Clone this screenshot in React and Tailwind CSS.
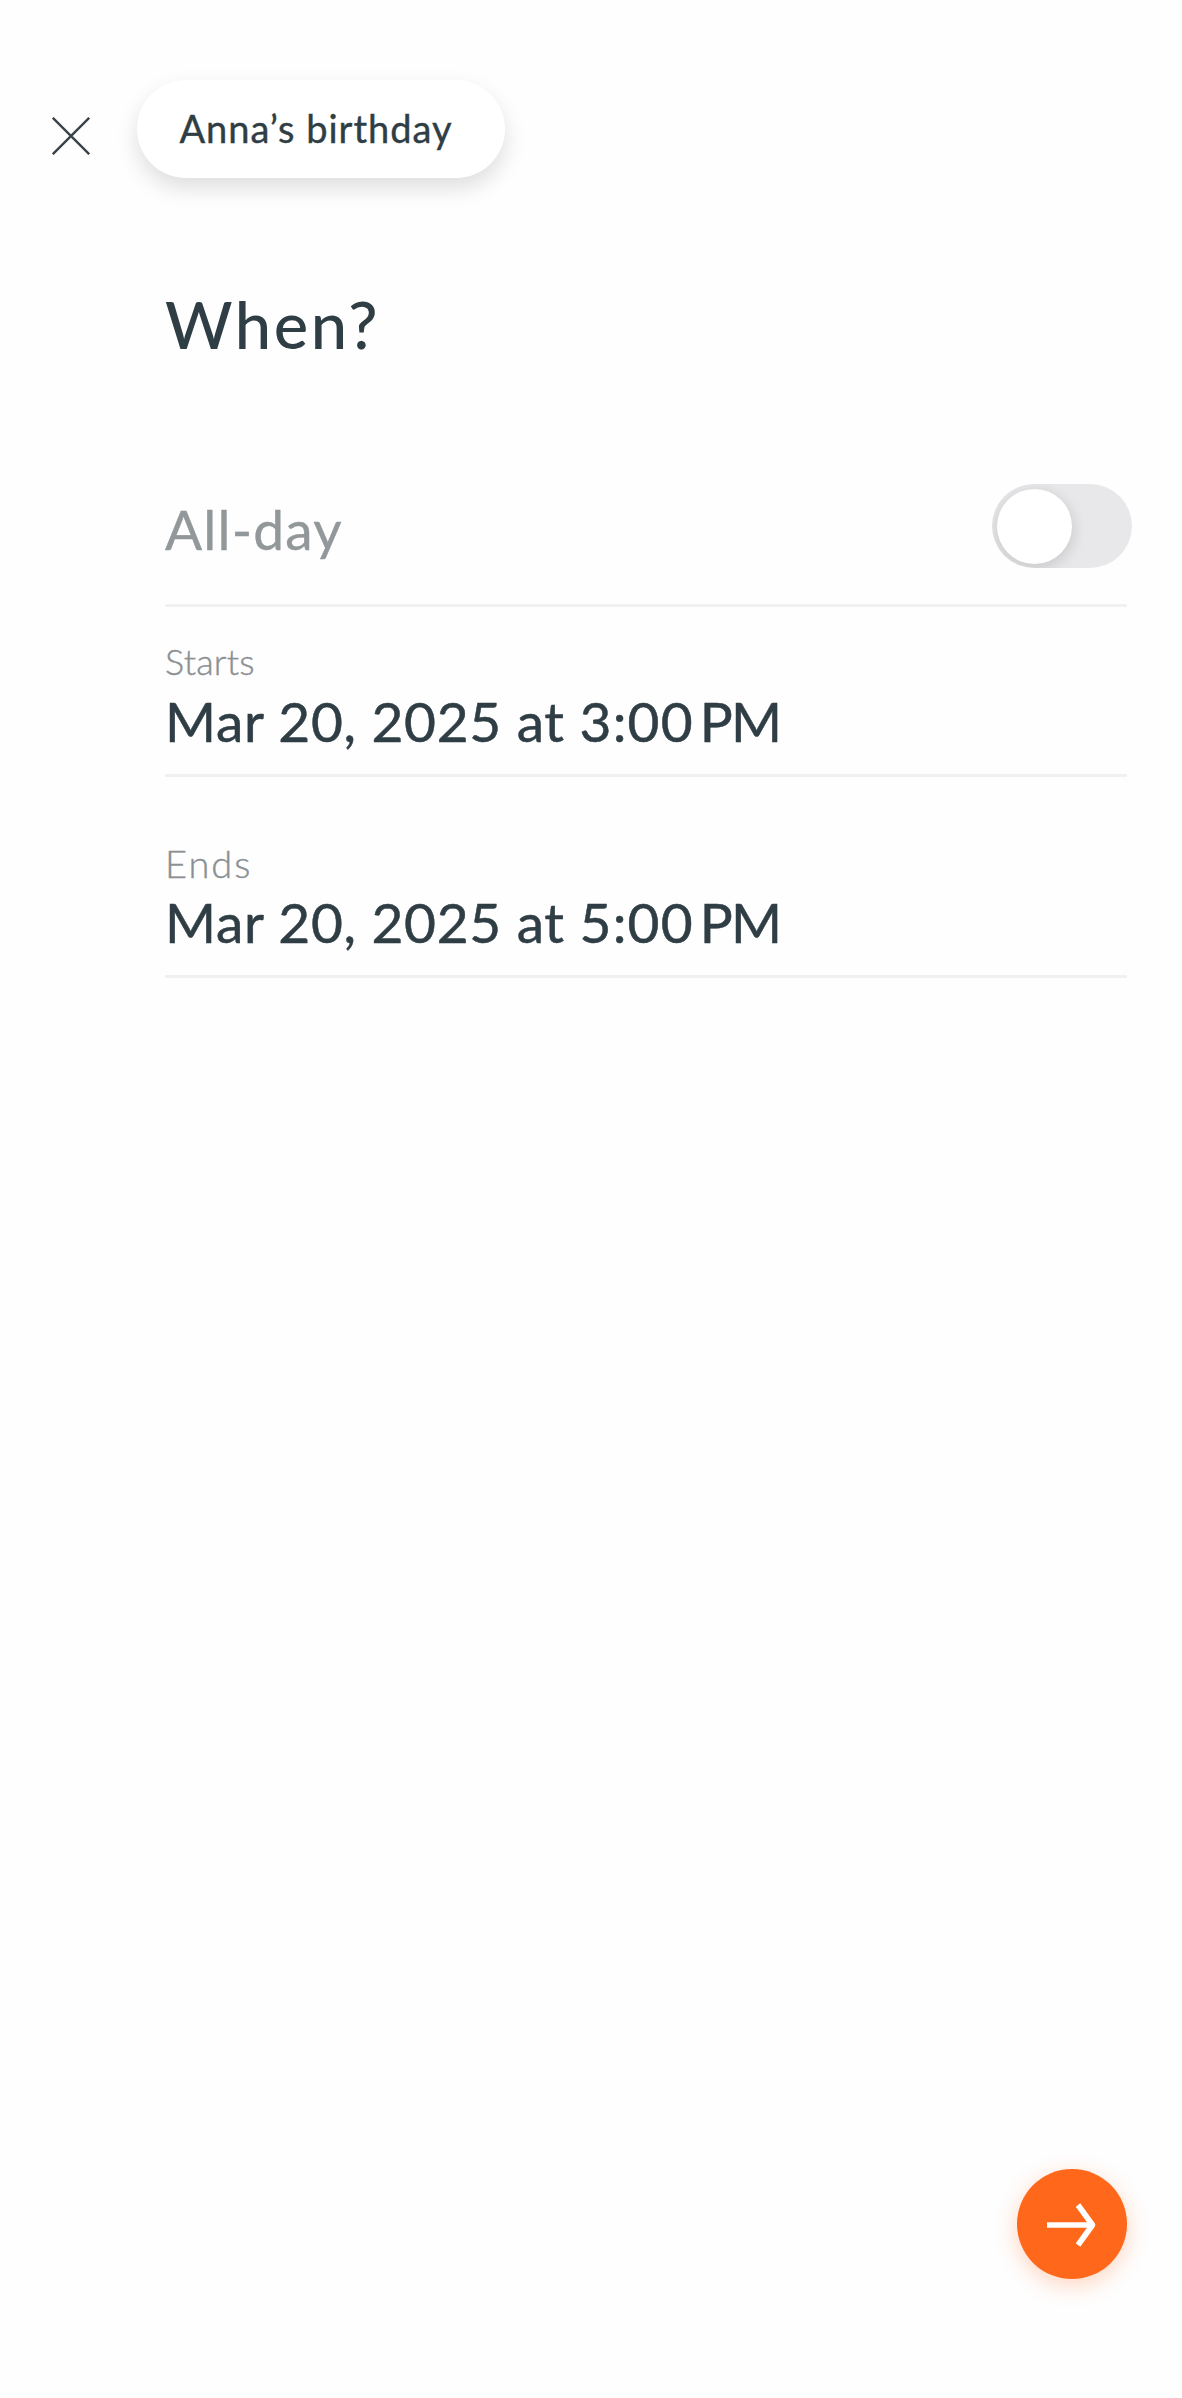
import { useState } from "react";

const CloseIcon = () => (
    <svg width="38" height="38" viewBox="0 0 38 38" fill="none" stroke="#39444a" strokeWidth="2.4">
        <path d="M0.8 0.8L37.2 37.2M37.2 0.8L0.8 37.2" />
    </svg>
)

const ArrowIcon = () => (
    <svg width="50" height="44" viewBox="0 0 50 44" fill="none" stroke="#fff" strokeWidth="5.6">
        <path d="M0 22H45" />
        <path d="M31 2L45.5 22L31 42" strokeLinejoin="round" />
    </svg>
)

const Toggle = ({ checked, onChange }) => (
    <button
        role="switch"
        aria-checked={checked}
        aria-label="All-day"
        onClick={() => onChange(!checked)}
        className={`flex items-center w-[140px] h-[84px] -mr-[5px] px-[5px] rounded-full overflow-hidden ${checked ? "justify-end bg-[#ff671b]" : "justify-start bg-[#e8e8ea]"}`}
    >
        <span className="w-[75px] h-[75px] rounded-full bg-white shadow-[0_4px_14px_2px_rgba(0,0,0,0.12)]" />
    </button>
)

const DateField = ({ date, time, period }) => (
    <p className="text-[55px] leading-[64px] tracking-[0.7px] whitespace-nowrap [-webkit-text-stroke:0.5px]">
        {date} at <span className="tracking-[1.2px]">{time}</span>
        <span className="ml-[6px] tracking-[-1.8px]">{period}</span>
    </p>
)

const App = () => {
    const [allDay, setAllDay] = useState(false);

    return (
        <div className="flex flex-col w-full min-h-[2398px] bg-[#fefefe] text-[#2f3d44] font-['Lato',sans-serif] font-normal">
            {/* header */}
            <header className="flex items-start pt-20 pl-[52px]">
                <button aria-label="Close" className="mt-[37px]">
                    <CloseIcon />
                </button>
                <div className="flex items-center justify-center w-[368px] h-[98px] ml-[47px] pb-[2px] pr-[10px] rounded-full bg-white shadow-[0_10px_22px_rgba(0,0,0,0.13)]">
                    <span className="text-[38px] tracking-[1px] whitespace-nowrap [-webkit-text-stroke:0.4px]">Anna’s birthday</span>
                </div>
            </header>

            <main className="ml-[165px] mr-[55px]">
                <h1 className="mt-[106px] text-[65px] leading-[80px] font-medium tracking-[2.6px]">When?</h1>

                {/* all-day */}
                <div className="flex justify-between mt-[120px] pb-9 border-b-3 border-[#f1f1f2]">
                    <span className="relative top-[3px] text-[55px] leading-[84px] tracking-[1.2px] text-[#92979a] [-webkit-text-stroke:0.4px]">All-day</span>
                    <Toggle checked={allDay} onChange={setAllDay} />
                </div>

                {/* starts */}
                <div className="pt-8 pb-[21px] border-b-3 border-[#f1f1f2]">
                    <p className="mb-[6px] text-[36px] leading-[44px] tracking-[0.2px] font-light text-[#8b9093] [-webkit-text-stroke:0.4px]">Starts</p>
                    <DateField date="Mar 20, 2025" time="3:00" period="PM" />
                </div>

                {/* ends */}
                <div className="pt-16 pb-[21px] border-b-3 border-[#f1f1f2]">
                    <p className="mb-[5px] text-[38px] leading-[44px] tracking-[2px] font-light text-[#8b9093] [-webkit-text-stroke:0.4px]">Ends</p>
                    <DateField date="Mar 20, 2025" time="5:00" period="PM" />
                </div>
            </main>

            <button
                aria-label="Next"
                className="flex items-center justify-center w-[110px] h-[110px] pt-[2px] mt-auto mb-[119px] mr-[55px] self-end rounded-full bg-[#ff671b] shadow-[0_6px_22px_rgba(255,103,27,0.28)]"
            >
                <ArrowIcon />
            </button>
        </div>
    )
}
export default App
